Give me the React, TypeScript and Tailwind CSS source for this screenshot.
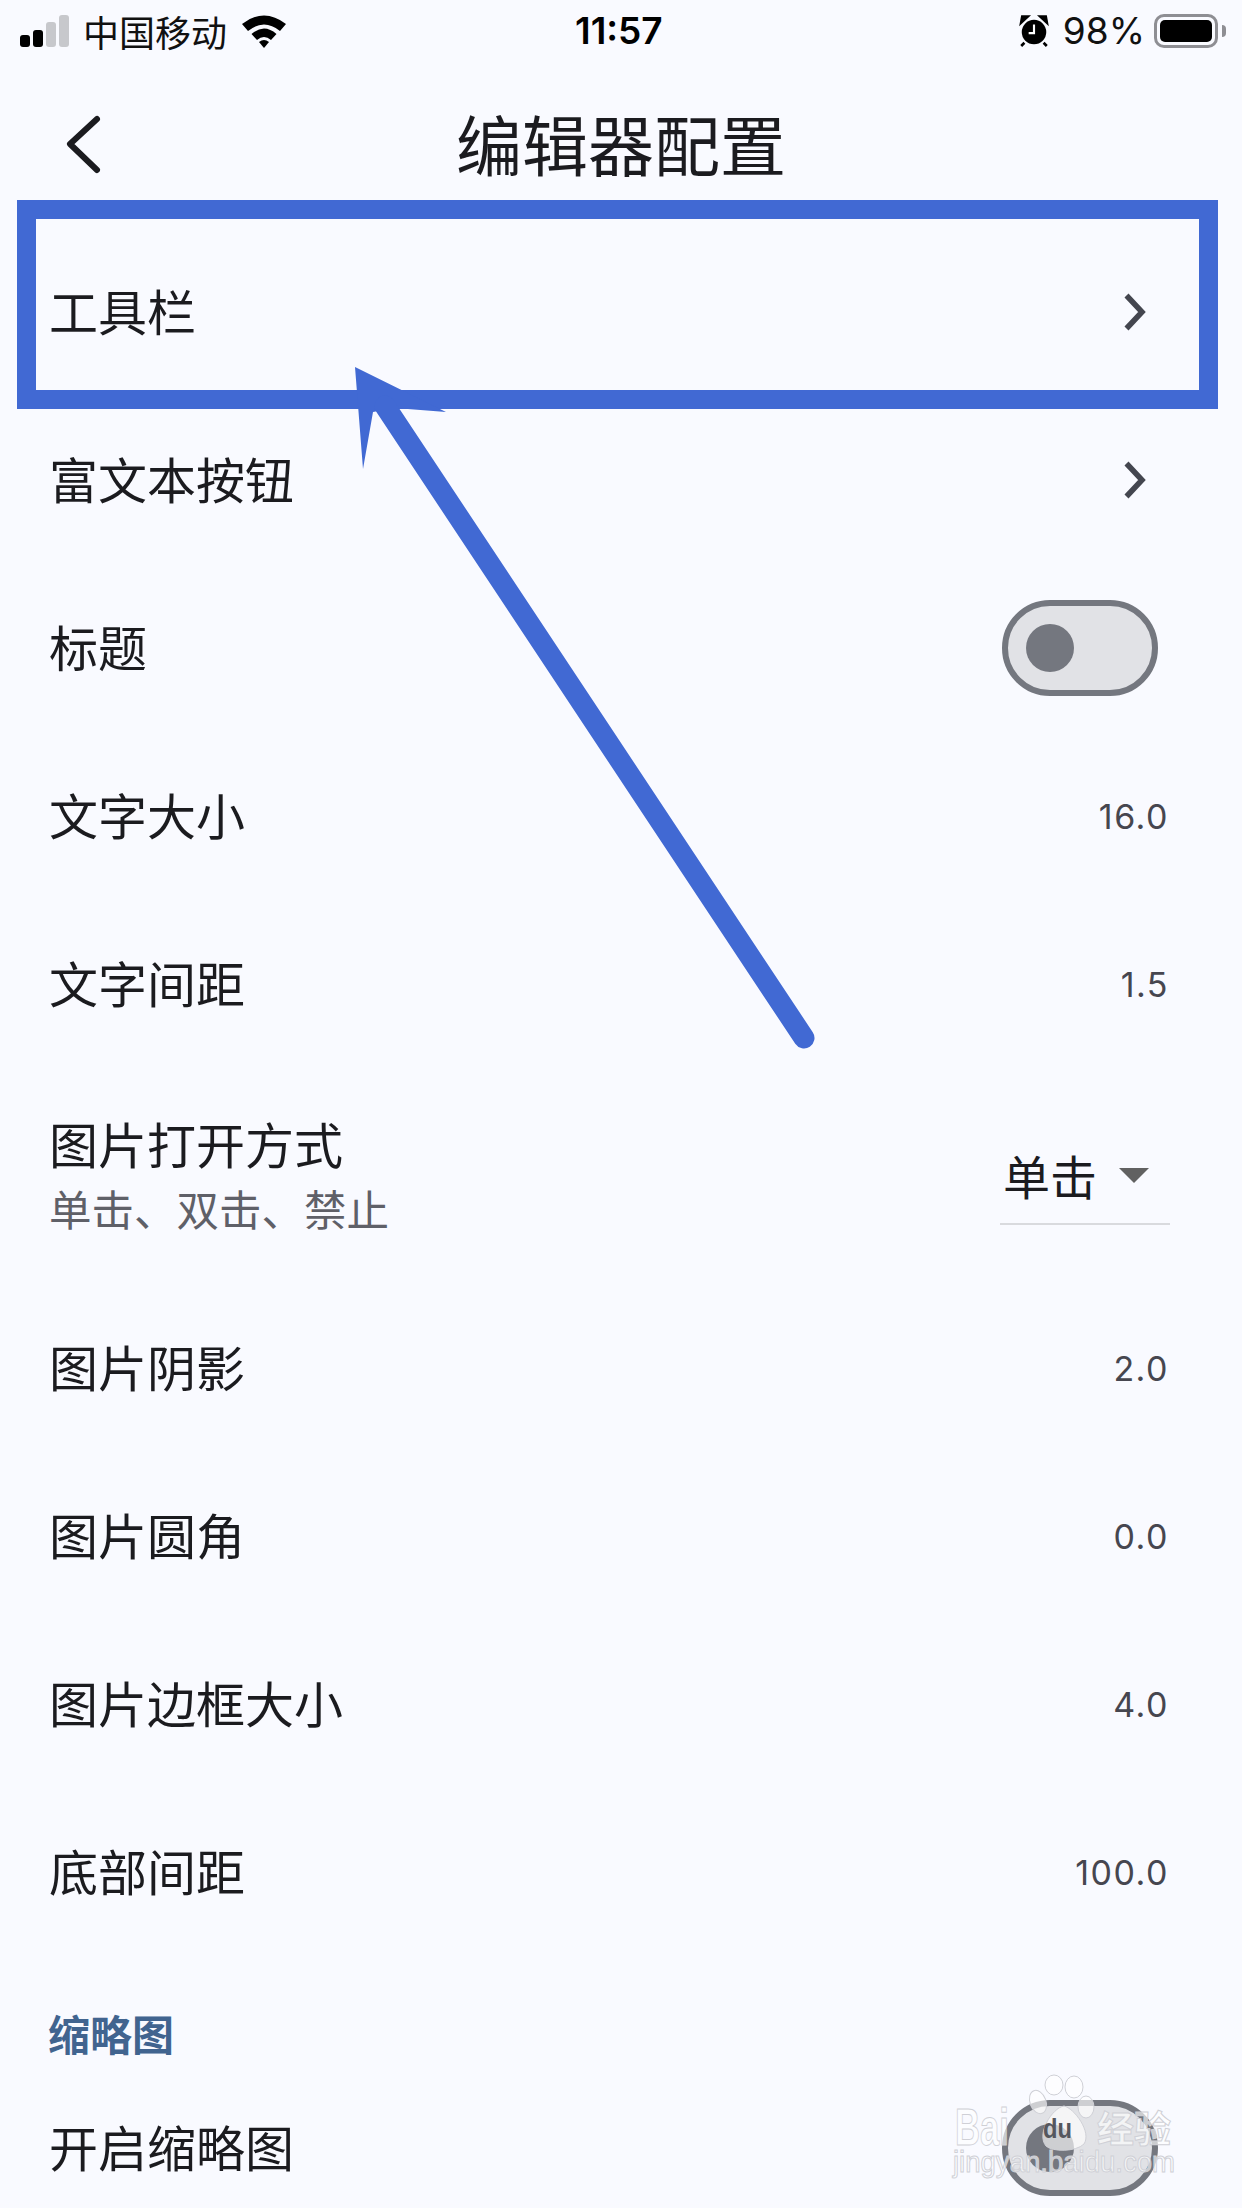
const cjk = "font-['Noto_Sans_CJK_SC',sans-serif]";

function Chevron() {
  return (
    <svg className="mr-[20px]" width="28" height="40" viewBox="0 0 28 40" fill="none">
      <path d="M4.500 3.500 L20 20 L4.500 36.500" stroke="#44464f" strokeWidth="5.500" />
    </svg>
  );
}

function Toggle() {
  return (
    <div className="mr-[12px] flex h-[96px] w-[156px] items-center rounded-full border-[6px] border-[#74777f] bg-[#e1e2e6] pl-[18px]">
      <div className="h-[48px] w-[48px] rounded-full bg-[#74777f]" />
    </div>
  );
}

function Row({ label, children }: { label: string; children?: React.ReactNode }) {
  return (
    <div className="flex h-[168px] items-center justify-between pl-[49px] pr-[72px]">
      <span className="mb-[5px] text-[49px] leading-[64px] text-[#1b1b1f]">{label}</span>
      {children}
    </div>
  );
}

function Value({ children }: { children: string }) {
  return <span className="mr-[1px] font-['Inter',sans-serif] text-[34px] tracking-[1.5px] text-[#46464f]">{children}</span>;
}

function StatusBar() {
  return (
    <div className="relative flex h-[60px] items-center justify-between pl-[20px] pr-[16px] pt-[2px]">
      <div className="flex items-center">
        <div className="flex items-end gap-[3px]">
          <div className="h-[12px] w-[10px] rounded-[3px] bg-black" />
          <div className="h-[17px] w-[10px] rounded-[3px] bg-black" />
          <div className="h-[25px] w-[10px] rounded-[3px] bg-[#c7c8cc]" />
          <div className="h-[32px] w-[10px] rounded-[3px] bg-[#c7c8cc]" />
        </div>
        <span className="ml-[14px] text-[36px] leading-[44px] text-[#111]">中国移动</span>
        <svg className="ml-[14px]" width="46" height="34" viewBox="0 0 46 34">
          <path d="M1 10 Q23 -7 45 10 L39 17 Q23 4 7 17 Z" fill="#000" />
          <path d="M10.500 20 Q23 9 35.500 20 L30 26 Q23 20 16 26 Z" fill="#000" />
          <path d="M18 28 Q23 24 28 28 L23 34 Z" fill="#000" />
        </svg>
      </div>
      <span className="absolute left-[575px] top-[10px] font-['Inter',sans-serif] text-[37px] font-semibold leading-[42px] text-black">11:57</span>
      <div className="flex items-center">
        <svg width="30" height="32" viewBox="0 0 28 30">
          <circle cx="14" cy="16" r="11.500" fill="#000" />
          <path d="M2 7 L8 1.500 L3 1.500 Z M26 7 L20 1.500 L25 1.500 Z M5 26 L2 29 M23 26 L26 29" stroke="#000" strokeWidth="2.500" fill="#000" />
          <path d="M14 9 V17 H9" stroke="#fff" strokeWidth="2" fill="none" />
        </svg>
        <span className="ml-[14px] font-['Inter',sans-serif] text-[37px] leading-[44px] text-[#111]">98%</span>
        <div className="ml-[9px] flex h-[34px] w-[64px] items-center rounded-[10px] border-[3px] border-[#8e8e93] p-[3px]">
          <div className="h-full w-full rounded-[5px] bg-black" />
        </div>
        <div className="ml-[4px] h-[12px] w-[4px] rounded-r-full bg-[#8e8e93]" />
      </div>
    </div>
  );
}

function Annotation() {
  return (
    <svg className="absolute left-0 top-0" width="1242" height="2208" viewBox="0 0 1242 2208" fill="none">
      <rect x="26.500" y="209.500" width="1182" height="190" stroke="#4169d3" strokeWidth="19" />
      <path d="M355 367 L446 412 L395 408 L373 412 L363 469 Z" fill="#4169d3" />
      <path d="M385 406 L804 1038" stroke="#4169d3" strokeWidth="21" strokeLinecap="round" />
    </svg>
  );
}

function Watermark() {
  return (
    <svg className="absolute left-[950px] top-[2070px]" width="240" height="112" viewBox="0 0 240 112">
      <g fill="#fff" fillOpacity="0.65" stroke="#cfd0d6" strokeWidth="1">
        <ellipse cx="104" cy="15" rx="9" ry="10" />
        <ellipse cx="124" cy="17" rx="9" ry="11" />
        <ellipse cx="136" cy="37" rx="8" ry="11" />
        <ellipse cx="88" cy="32" rx="8" ry="12" transform="rotate(-20 88 32)" />
        <path d="M114 36 C124 38 142 62 134 74 C126 82 102 82 96 76 C86 64 102 38 114 36 Z" />
        <text x="5" y="75" fontFamily="Liberation Sans, sans-serif" fontSize="52" fontWeight="700" textLength="54" lengthAdjust="spacingAndGlyphs">Bai</text>
        <text x="147" y="73" fontFamily="Noto Sans CJK SC, sans-serif" fontSize="37" fontWeight="700">经验</text>
        <text x="3" y="102" fontFamily="Liberation Sans, sans-serif" fontSize="29" textLength="222" lengthAdjust="spacingAndGlyphs">jingyan.baidu.com</text>
      </g>
      <text x="93" y="68" fontFamily="Liberation Sans, sans-serif" fontSize="28" fontWeight="700" textLength="29" lengthAdjust="spacingAndGlyphs" fill="#55575e">du</text>
    </svg>
  );
}

export default function App() {
  return (
    <div className={`relative h-[2208px] w-[1242px] overflow-hidden bg-[#f9faff] ${cjk}`}>
      <StatusBar />
      <div className="relative flex h-[168px] items-center justify-center pb-[4px]">
        <svg className="absolute left-[60px] top-[54px]" width="44" height="64" viewBox="0 0 44 64" fill="none">
          <path d="M37 5 L10 30 L37 56" stroke="#1b1b1f" strokeWidth="6" strokeLinecap="round" strokeLinejoin="round" />
        </svg>
        <span className="text-[66px] leading-[80px] text-[#1b1b1f]">编辑器配置</span>
      </div>
      <Row label="工具栏"><Chevron /></Row>
      <Row label="富文本按钮"><Chevron /></Row>
      <Row label="标题"><Toggle /></Row>
      <Row label="文字大小"><Value>16.0</Value></Row>
      <Row label="文字间距"><Value>1.5</Value></Row>
      <div className="flex h-[216px] items-center justify-between pl-[49px] pr-[72px]">
        <div className="flex flex-col">
          <span className="text-[49px] leading-[64px] text-[#1b1b1f]">图片打开方式</span>
          <span className="text-[42.5px] leading-[66px] text-[#5f6068]">单击、双击、禁止</span>
        </div>
        <div className="flex h-[98px] w-[170px] items-center justify-between border-b-2 border-[#d9dade] pl-[3px] pr-[21px]">
          <span className="text-[47px] text-[#1b1b1f]">单击</span>
          <div className="h-0 w-0 border-x-[15px] border-t-[15px] border-x-transparent border-t-[#616161]" />
        </div>
      </div>
      <Row label="图片阴影"><Value>2.0</Value></Row>
      <Row label="图片圆角"><Value>0.0</Value></Row>
      <Row label="图片边框大小"><Value>4.0</Value></Row>
      <Row label="底部间距"><Value>100.0</Value></Row>
      <div className="flex h-[108px] items-end pb-[1px] pl-[48px]">
        <span className="text-[42px] font-bold leading-[60px] text-[#41648f]">缩略图</span>
      </div>
      <Row label="开启缩略图"><Toggle /></Row>
      <Annotation />
      <Watermark />
    </div>
  );
}
